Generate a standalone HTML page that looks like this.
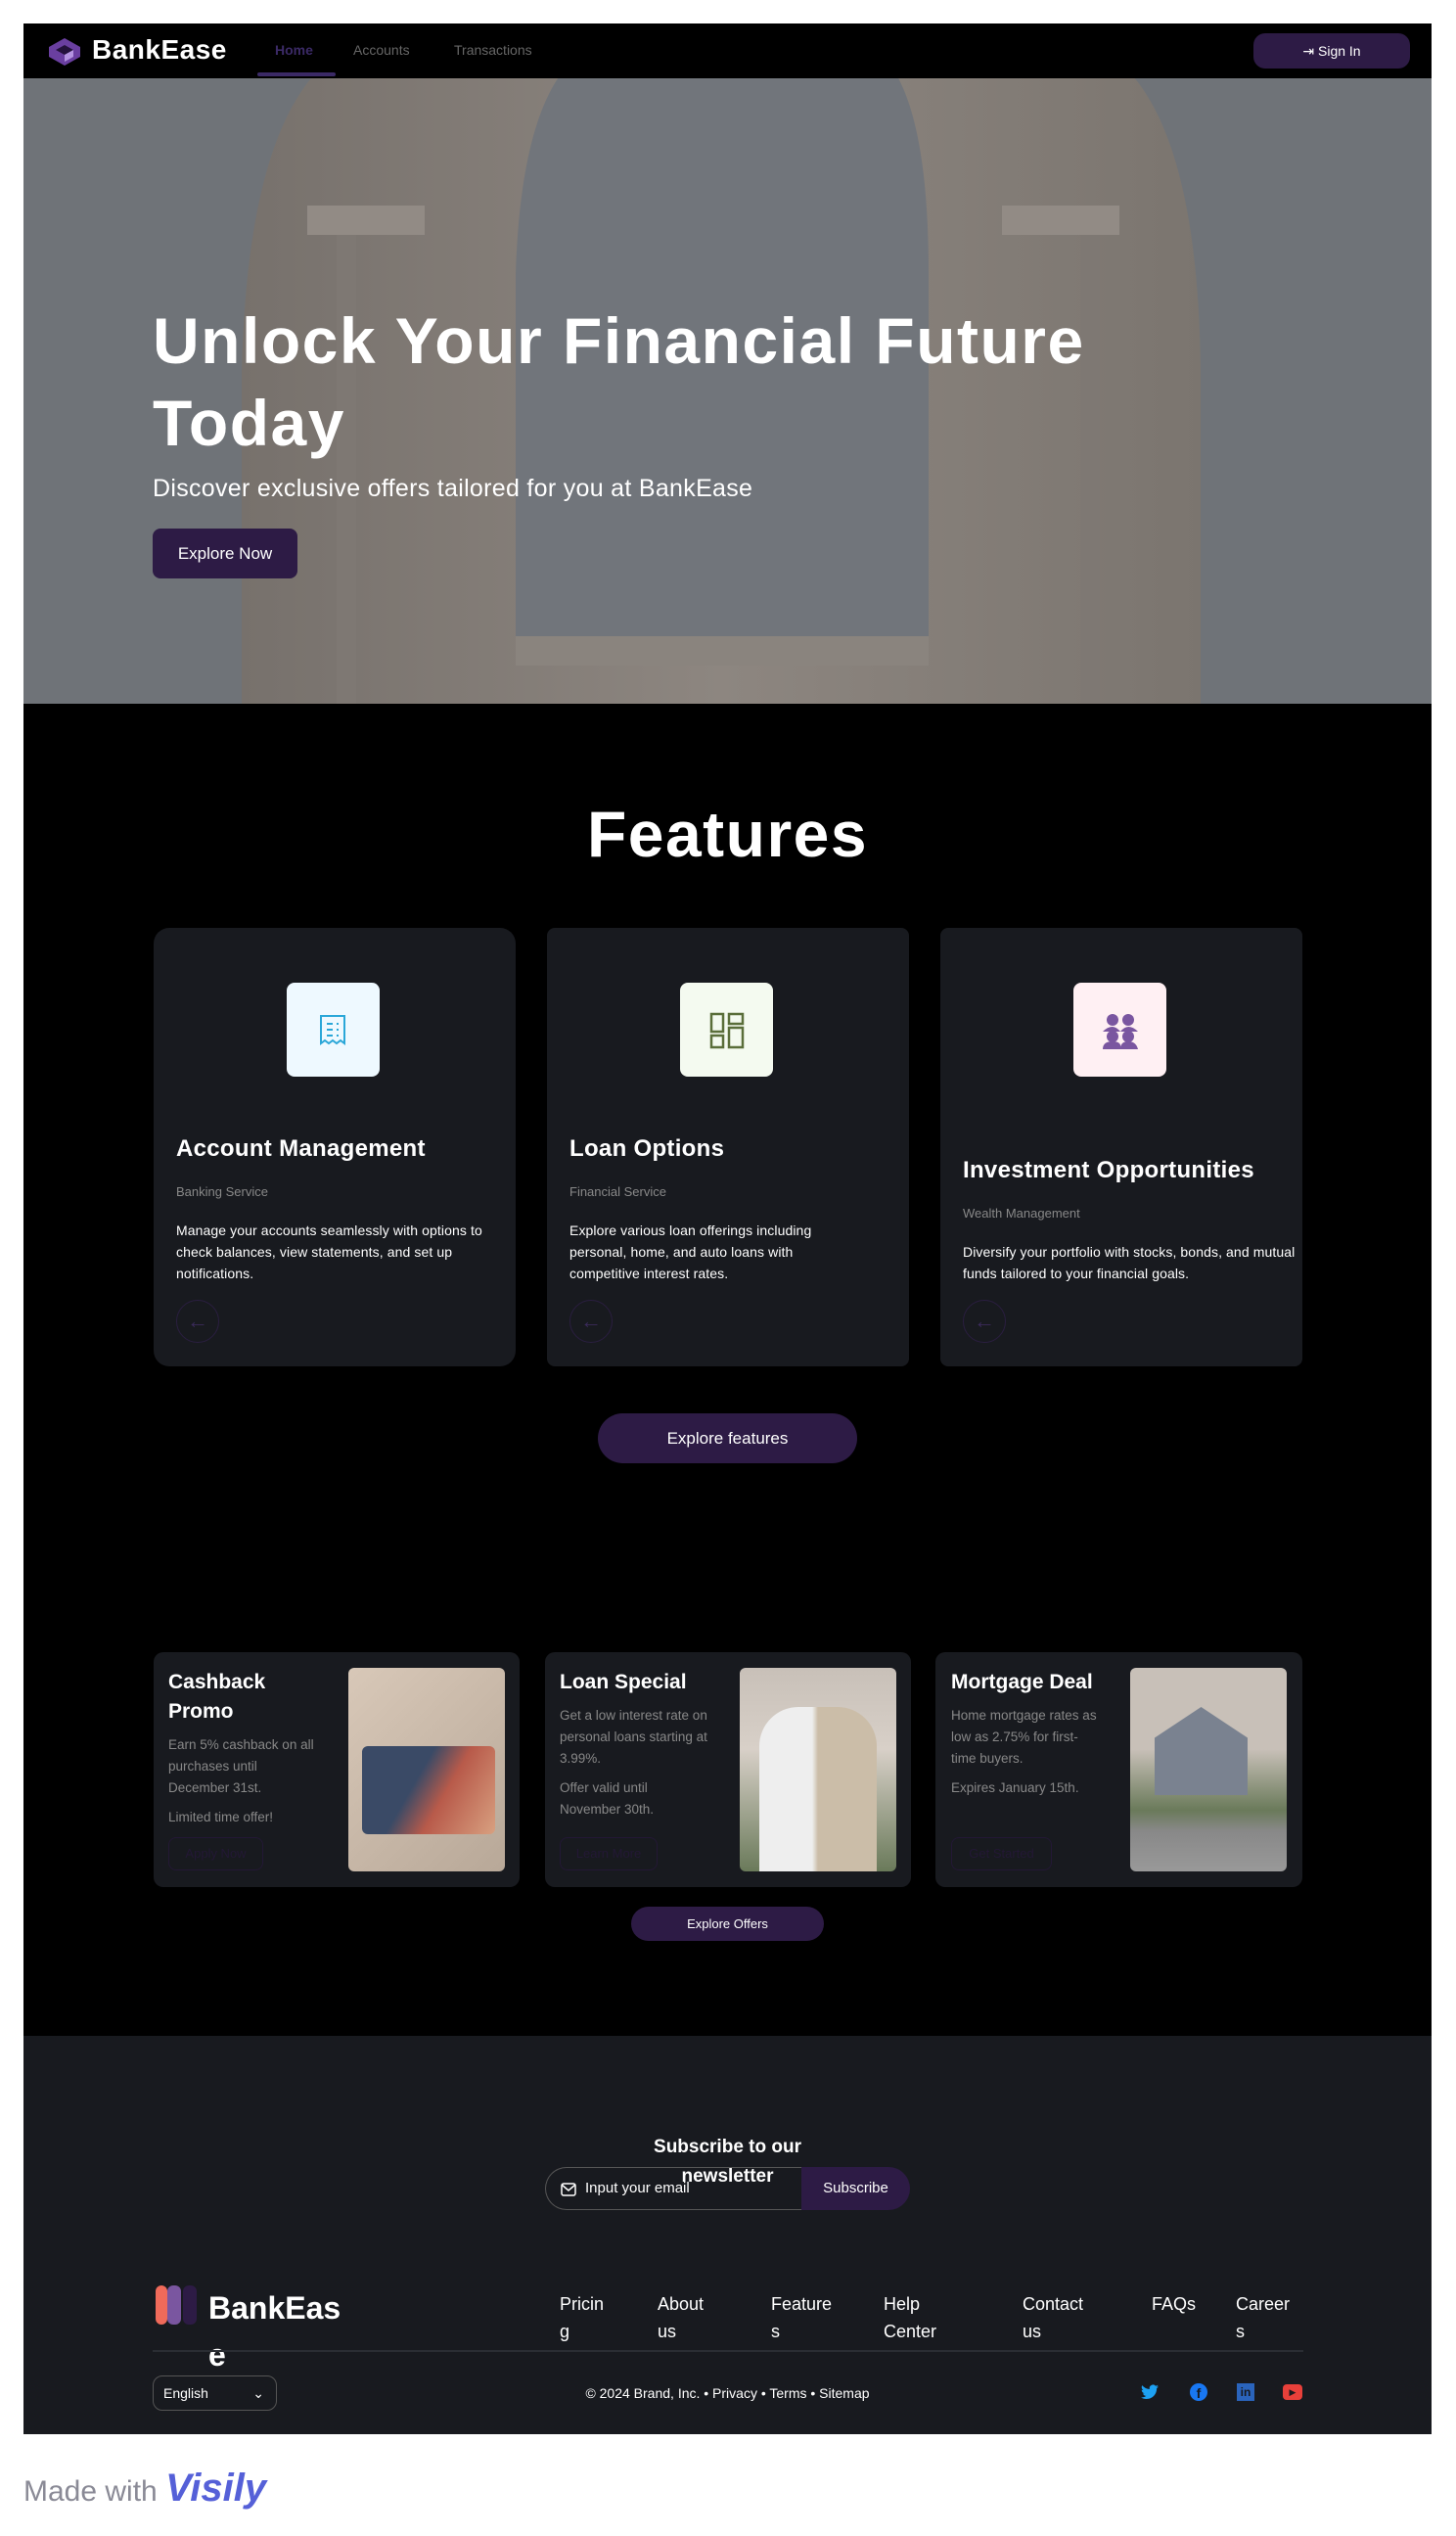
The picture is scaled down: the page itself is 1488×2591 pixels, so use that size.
<!DOCTYPE html>
<html><head><meta charset="utf-8">
<style>
*{box-sizing:border-box;margin:0;padding:0}
body{width:1488px;height:2591px;background:#fff;font-family:"Liberation Sans",sans-serif;position:relative;overflow:hidden}
.a{position:absolute}
.frame{left:24px;top:24px;width:1439px;height:2463px;background:#000;overflow:hidden}
.nav{left:0;top:0;width:1439px;height:56px;background:#000}
.card{background:#181a1f;border-radius:16px}
.t{color:#fff;font-weight:bold}
.btn{background:#2d1b45;color:#fff;border-radius:24px;text-align:center}
.arr{width:44px;height:44px;border:1px solid #2a1e40;border-radius:50%;color:#3a2a5a;text-align:center;line-height:42px;font-size:22px}
</style></head><body>
<div class="a frame">
  <div class="a" style="left:0;top:56px;width:1439px;height:639px;background:#6f7378;overflow:hidden">
    <svg class="a" style="left:0;top:0" width="1439" height="639" viewBox="0 0 1439 639">
      <defs><linearGradient id="s" x1="0" x2="1"><stop offset="0" stop-color="#77716c"/><stop offset="0.5" stop-color="#8d8680"/><stop offset="1" stop-color="#7b756f"/></linearGradient></defs>
      <path d="M223 639 L223 300 Q230 0 350 -40 L1080 -40 Q1200 0 1203 300 L1203 639 Z" fill="url(#s)"/>
      <path d="M503 570 L503 200 Q510 -20 600 -40 L850 -40 Q925 -20 925 200 L925 570 Z" fill="#71757b"/>
      <rect x="503" y="570" width="422" height="30" fill="#8a847e"/>
      <rect x="290" y="130" width="120" height="30" fill="#928b85"/>
      <rect x="1000" y="130" width="120" height="30" fill="#928b85"/>
      <rect x="320" y="160" width="20" height="479" fill="#7e7873"/>
      <rect x="1080" y="160" width="20" height="479" fill="#7e7873"/>
    </svg>
    <div class="a t" style="left:132px;top:226px;font-size:66px;line-height:84px;width:1100px;letter-spacing:1.5px">Unlock Your Financial Future<br>Today</div>
    <div class="a" style="left:132px;top:405px;font-size:25px;color:#fff;letter-spacing:0.3px">Discover exclusive offers tailored for you at BankEase</div>
    <div class="a" style="left:132px;top:460px;width:148px;height:51px;background:#2d1b45;border-radius:8px;color:#fff;font-size:17px;line-height:51px;text-align:center">Explore Now</div>
  </div>
  <div class="a nav">
    <svg class="a" style="left:25px;top:14px" width="34" height="30" viewBox="0 0 34 30"><path d="M17 1 L33 10 L33 20 L17 29 L1 20 L1 10 Z" fill="#6a3fa0"/><path d="M17 8 L26 13 L17 18 L8 13Z" fill="#24123c"/><path d="M17 18 L26 13 L26 20 L17 25Z" fill="#b494e0"/></svg>
    <div class="a t" style="left:70px;top:11px;font-size:28px;letter-spacing:0.5px">BankEase</div>
    <div class="a" style="left:257px;top:19px;font-size:14px;color:#3b2a66;font-weight:bold">Home</div>
    <div class="a" style="left:239px;top:50px;width:80px;height:4px;background:#3b2a66;border-radius:2px"></div>
    <div class="a" style="left:337px;top:19px;font-size:14px;color:#666">Accounts</div>
    <div class="a" style="left:440px;top:19px;font-size:14px;color:#666">Transactions</div>
    <div class="a btn" style="left:1257px;top:10px;width:160px;height:36px;border-radius:12px;font-size:14px;line-height:36px">⇥ Sign In</div>
  </div>
  <div class="a t" style="left:0;width:1439px;top:790px;text-align:center;font-size:66px;letter-spacing:1.5px">Features</div>
  <div class="a card" style="left:133px;top:924px;width:370px;height:448px"></div>
  <div class="a card" style="left:535px;top:924px;width:370px;height:448px;border-radius:8px"></div>
  <div class="a card" style="left:937px;top:924px;width:370px;height:448px;border-radius:8px"></div>
  <div class="a" style="left:269px;top:980px;width:95px;height:96px;background:#eef9ff;border-radius:8px"><svg style="margin:32px 0 0 32px" width="30" height="34" viewBox="0 0 30 34"><path d="M3 2h24v28l-4-3-4 3-4-3-4 3-4-3-4 3z" fill="none" stroke="#2aa7d8" stroke-width="2"/><path d="M9 10h6M9 16h6M9 22h6M19 10h2M19 16h2M19 22h2" stroke="#2aa7d8" stroke-width="2"/></svg></div>
  <div class="a" style="left:671px;top:980px;width:95px;height:96px;background:#f4faf0;border-radius:8px"><svg style="margin:30px 0 0 30px" width="36" height="38" viewBox="0 0 36 38"><g fill="none" stroke="#5a6e3a" stroke-width="2.5"><rect x="2" y="2" width="12" height="18"/><rect x="2" y="24" width="12" height="12"/><rect x="20" y="2" width="14" height="10"/><rect x="20" y="16" width="14" height="20"/></g></svg></div>
  <div class="a" style="left:1073px;top:980px;width:95px;height:96px;background:#fff0f3;border-radius:8px"><svg style="margin:30px 0 0 28px" width="40" height="40" viewBox="0 0 40 40" fill="#7a56a0"><circle cx="12" cy="8" r="6"/><circle cx="28" cy="8" r="6"/><path d="M2 20q10-10 18 0q8-10 18 0z"/><circle cx="12" cy="25" r="6"/><circle cx="28" cy="25" r="6"/><path d="M2 38q0-8 10-8t8 8q0-8 8-8t10 8z"/></svg></div>
  <div class="a t" style="left:156px;top:1136px;font-size:24px;letter-spacing:0.3px">Account Management</div>
  <div class="a t" style="left:558px;top:1136px;font-size:24px;letter-spacing:0.3px">Loan Options</div>
  <div class="a t" style="left:960px;top:1158px;font-size:24px;letter-spacing:0.3px">Investment Opportunities</div>
  <div class="a" style="left:156px;top:1186px;font-size:13px;color:#888">Banking Service</div>
  <div class="a" style="left:558px;top:1186px;font-size:13px;color:#888">Financial Service</div>
  <div class="a" style="left:960px;top:1208px;font-size:13px;color:#888">Wealth Management</div>
  <div class="a" style="left:156px;top:1222px;width:340px;font-size:14px;line-height:22px;color:#fff;letter-spacing:0.1px">Manage your accounts seamlessly with options to check balances, view statements, and set up notifications.</div>
  <div class="a" style="left:558px;top:1222px;width:290px;font-size:14px;line-height:22px;color:#fff;letter-spacing:0.1px">Explore various loan offerings including personal, home, and auto loans with competitive interest rates.</div>
  <div class="a" style="left:960px;top:1244px;width:340px;font-size:14px;line-height:22px;color:#fff;letter-spacing:0.1px">Diversify your portfolio with stocks, bonds, and mutual funds tailored to your financial goals.</div>
  <div class="a arr" style="left:156px;top:1304px">←</div>
  <div class="a arr" style="left:558px;top:1304px">←</div>
  <div class="a arr" style="left:960px;top:1304px">←</div>
  <div class="a btn" style="left:587px;top:1420px;width:265px;height:51px;font-size:17px;line-height:51px;border-radius:26px">Explore features</div>
  <div class="a card" style="left:133px;top:1664px;width:374px;height:240px;border-radius:10px"></div>
  <div class="a card" style="left:533px;top:1664px;width:374px;height:240px;border-radius:10px"></div>
  <div class="a card" style="left:932px;top:1664px;width:375px;height:240px;border-radius:10px"></div>
  <div class="a" style="left:332px;top:1680px;width:160px;height:208px;background:linear-gradient(135deg,#d8c8b8,#b8a898);border-radius:6px"><div style="margin:80px 0 0 14px;width:136px;height:90px;border-radius:6px;background:linear-gradient(120deg,#3a4a66 40%,#b85a4a 60%,#d8a080)"></div></div>
  <div class="a" style="left:732px;top:1680px;width:160px;height:208px;background:linear-gradient(180deg,#c8c0b8,#d8d0c8 40%,#6a7a5a 100%);border-radius:6px"><div style="margin:40px 0 0 20px;width:120px;height:168px;background:linear-gradient(90deg,#eee 0,#eee 45%,#cbbda8 50%,#cbbda8 100%);border-radius:40px 40px 0 0"></div></div>
  <div class="a" style="left:1131px;top:1680px;width:160px;height:208px;background:linear-gradient(180deg,#c8c0b8 0,#c8c0b8 40%,#6a7a5a 70%,#888 80%,#999);border-radius:6px"><div style="margin:40px 0 0 25px;width:95px;height:90px;background:#7a8290;clip-path:polygon(50% 0,100% 35%,100% 100%,0 100%,0 35%)"></div></div>
  <div class="a t" style="left:148px;top:1680px;font-size:21px;line-height:30px;width:170px">Cashback<br>Promo</div>
  <div class="a t" style="left:548px;top:1680px;font-size:21px;line-height:30px">Loan Special</div>
  <div class="a t" style="left:948px;top:1680px;font-size:21px;line-height:30px">Mortgage Deal</div>
  <div class="a" style="left:148px;top:1748px;font-size:13.5px;line-height:22px;color:#888;width:152px">Earn 5% cashback on all purchases until December 31st.<div style="margin-top:8px">Limited time offer!</div></div>
  <div class="a" style="left:548px;top:1718px;font-size:13.5px;line-height:22px;color:#888;width:152px">Get a low interest rate on personal loans starting at 3.99%.<div style="margin-top:8px">Offer valid until November 30th.</div></div>
  <div class="a" style="left:948px;top:1718px;font-size:13.5px;line-height:22px;color:#888;width:152px">Home mortgage rates as low as 2.75% for first-time buyers.<div style="margin-top:8px">Expires January 15th.</div></div>
  <div class="a" style="left:148px;top:1853px;width:97px;height:34px;border:1px solid #231835;border-radius:8px;color:#231835;font-size:13px;line-height:32px;text-align:center">Apply Now</div>
  <div class="a" style="left:548px;top:1853px;width:100px;height:34px;border:1px solid #231835;border-radius:8px;color:#231835;font-size:13px;line-height:32px;text-align:center">Learn More</div>
  <div class="a" style="left:948px;top:1853px;width:103px;height:34px;border:1px solid #231835;border-radius:8px;color:#231835;font-size:13px;line-height:32px;text-align:center">Get Started</div>
  <div class="a btn" style="left:621px;top:1924px;width:197px;height:35px;font-size:13px;line-height:35px">Explore Offers</div>
  <div class="a" style="left:0;top:2056px;width:1439px;height:407px;background:#181a1f"></div>
  <div class="a t" style="left:0;width:1439px;top:2155px;text-align:center;font-size:19px;line-height:30px">Subscribe to our<br>newsletter</div>
  <div class="a" style="left:533px;top:2190px;width:262px;height:44px;border:1px solid #555;border-right:none;border-radius:22px 0 0 22px;color:#fff;font-size:15px;line-height:42px;padding-left:40px">Input your email</div>
  <svg class="a" style="left:549px;top:2206px" width="16" height="14"><rect x="1" y="1" width="14" height="12" rx="2" fill="none" stroke="#fff" stroke-width="1.5"/><path d="M1 2l7 6 7-6" fill="none" stroke="#fff" stroke-width="1.5"/></svg>
  <div class="a" style="left:795px;top:2190px;width:111px;height:44px;background:#2d1b45;border-radius:0 22px 22px 0;color:#fff;font-size:15px;line-height:44px;text-align:center">Subscribe</div>
  <svg class="a" style="left:133px;top:2309px" width="46" height="42"><rect x="2" y="2" width="12" height="40" rx="6" fill="#f06a5a"/><rect x="14" y="2" width="14" height="40" rx="6" fill="#7a56a0"/><rect x="30" y="2" width="14" height="40" rx="6" fill="#2d1b45"/></svg>
  <div class="a t" style="left:189px;top:2310px;font-size:32px;line-height:48px;width:150px;word-break:break-all">BankEase</div>
  <div class="a" style="left:548px;top:2316px;font-size:18px;line-height:28px;color:#fff">Pricin<br>g</div>
  <div class="a" style="left:648px;top:2316px;font-size:18px;line-height:28px;color:#fff">About<br>us</div>
  <div class="a" style="left:764px;top:2316px;font-size:18px;line-height:28px;color:#fff">Feature<br>s</div>
  <div class="a" style="left:879px;top:2316px;font-size:18px;line-height:28px;color:#fff">Help<br>Center</div>
  <div class="a" style="left:1021px;top:2316px;font-size:18px;line-height:28px;color:#fff">Contact<br>us</div>
  <div class="a" style="left:1153px;top:2316px;font-size:18px;line-height:28px;color:#fff">FAQs</div>
  <div class="a" style="left:1239px;top:2316px;font-size:18px;line-height:28px;color:#fff">Career<br>s</div>
  <div class="a" style="left:132px;top:2377px;width:1176px;height:2px;background:#2a2d33"></div>
  <div class="a" style="left:132px;top:2403px;width:127px;height:36px;border:1px solid #555;border-radius:10px;color:#fff;font-size:14px;line-height:34px;padding-left:10px">English<span style="position:absolute;right:12px">⌄</span></div>
  <div class="a" style="left:0;width:1439px;top:2413px;text-align:center;color:#fff;font-size:14px">© 2024 Brand, Inc. • Privacy • Terms • Sitemap</div>
  <svg class="a" style="left:1142px;top:2412px" width="18" height="16" viewBox="0 0 24 20"><path d="M24 2.4a10 10 0 0 1-2.8.8A5 5 0 0 0 23.3.4a10 10 0 0 1-3.1 1.2A4.9 4.9 0 0 0 11.8 6 14 14 0 0 1 1.7.9a4.9 4.9 0 0 0 1.5 6.6A4.9 4.9 0 0 1 1 6.9a4.9 4.9 0 0 0 3.9 4.8 5 5 0 0 1-2.2.1 4.9 4.9 0 0 0 4.6 3.4A9.9 9.9 0 0 1 0 17.2 14 14 0 0 0 7.5 19.4c9.1 0 14-7.5 14-14v-.6A10 10 0 0 0 24 2.4z" fill="#1da1f2"/></svg>
  <div class="a" style="left:1192px;top:2411px;width:18px;height:18px;border-radius:50%;background:#1877f2;color:#181a1f;font-weight:bold;font-size:14px;text-align:center;line-height:20px">f</div>
  <div class="a" style="left:1240px;top:2411px;width:18px;height:18px;background:#2a64bc;color:#181a1f;font-weight:bold;font-size:12px;text-align:center;line-height:18px">in</div>
  <div class="a" style="left:1287px;top:2412px;width:20px;height:16px;background:#e8403a;border-radius:4px;color:#181a1f;font-size:9px;text-align:center;line-height:16px">▶</div>
</div>
<div class="a" style="left:24px;top:2520px;font-size:30px;color:#8a8a96">Made with <span style="font-weight:bold;font-size:40px;color:#5560d8;font-style:italic">Visily</span></div>
</body></html>
